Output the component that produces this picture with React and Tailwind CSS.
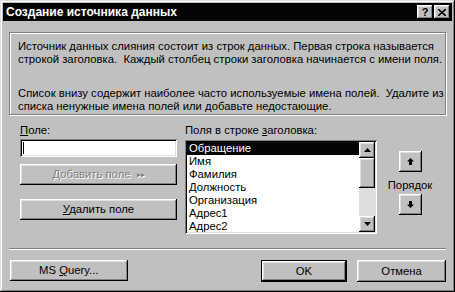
const raised =
  'shadow-[inset_-1px_-1px_#000,inset_1px_1px_#fff,inset_-2px_-2px_#808080,inset_2px_2px_#dfdfdf]';
const sunken =
  'shadow-[inset_1px_1px_#808080,inset_-1px_-1px_#fff,inset_2px_2px_#000,inset_-2px_-2px_#dfdfdf]';

function Arrow({ dir = 'up', stem = false }) {
  // small black triangle, optional stem for the order buttons
  if (stem) {
    return (
      <svg width="7" height="7" viewBox="0 0 7 7" className="block">
        {dir === 'up' ? (
          <path d="M3.5 0 L7 3.5 L0 3.5 Z M2 3.5 H5 V7 H2 Z" fill="#000" />
        ) : (
          <path d="M2 0 H5 V3.5 H2 Z M0 3.5 H7 L3.5 7 Z" fill="#000" />
        )}
      </svg>
    );
  }
  return (
    <svg width="7" height="4" viewBox="0 0 7 4" className="block">
      {dir === 'up' ? (
        <path d="M3.5 0 L7 4 L0 4 Z" fill="#000" />
      ) : (
        <path d="M0 0 H7 L3.5 4 Z" fill="#000" />
      )}
    </svg>
  );
}

function Button({ children, className = '', isDefault = false, disabled = false }) {
  const inner = (
    <div
      className={`flex h-full w-full items-center justify-center bg-[#c0c0c0] ${raised} ${
        disabled ? 'text-[#808080] [text-shadow:1px_1px_#fff]' : 'text-black'
      }`}
    >
      {children}
    </div>
  );
  if (isDefault) {
    return <div className={`border border-black ${className}`}>{inner}</div>;
  }
  return <div className={className}>{inner}</div>;
}

const fields = ['Обращение', 'Имя', 'Фамилия', 'Должность', 'Организация', 'Адрес1', 'Адрес2'];

export default function App() {
  return (
    <div
      className={`flex h-[292px] w-[455px] flex-col overflow-hidden bg-[#c0c0c0] p-[3px] text-[11.3px] leading-[13px] text-black ${'shadow-[inset_-1px_-1px_#000,inset_1px_1px_#dfdfdf,inset_-2px_-2px_#808080,inset_2px_2px_#fff]'}`}
      style={{ fontFamily: '"Liberation Sans", Arial, sans-serif' }}
    >
      {/* title bar */}
      <div className="flex h-[18px] shrink-0 items-center justify-between bg-[#050505] pl-[3px] pr-[2px]">
        <span className="text-[12px] font-bold leading-[16px] text-white">
          Создание источника данных
        </span>
        <div className="flex">
          <div className={`flex h-[14px] w-[16px] items-center justify-center bg-[#c0c0c0] ${raised}`}>
            <span className="text-[11px] font-bold leading-none">?</span>
          </div>
          <div className={`ml-[1px] flex h-[14px] w-[16px] items-center justify-center bg-[#c0c0c0] ${raised}`}>
            <svg width="8" height="7" viewBox="0 0 8 7" className="block">
              <path d="M0 0 L8 7 M8 0 L0 7" stroke="#000" strokeWidth="1.6" />
            </svg>
          </div>
        </div>
      </div>

      <div className="flex flex-1 flex-col px-[6px]">
        {/* info group */}
        <div className="mt-[11px] h-[83px] border border-[#808080] pl-[8px] pt-[7px] shadow-[inset_1px_1px_#fff,1px_1px_#fff]">
          <p className="leading-[13px]">
            Источник данных слияния состоит из строк данных. Первая строка называется
            <br />
            строкой заголовка.&nbsp; Каждый столбец строки заголовка начинается с имени поля.
          </p>
          <p className="mt-[21px] leading-[13px]">
            Список внизу содержит наиболее часто используемые имена полей.&nbsp; Удалите из
            <br />
            списка ненужные имена полей или добавьте недостающие.
          </p>
        </div>

        {/* middle */}
        <div className="mt-[9px] flex">
          <div className="ml-[11px] flex w-[157px] flex-col">
            <span>
              <u>П</u>оле:
            </span>
            <div className={`mt-[2px] flex h-[18px] items-center bg-white pl-[3px] ${sunken}`}>
              <span className="h-[12px] w-[1px] bg-black" />
            </div>
            <Button disabled className="mt-[7px] h-[21px]">
              <span>
                <u>Д</u>обавить поле
              </span>
              <span className="ml-[6px] text-[7px] font-bold">▸▸</span>
            </Button>
            <Button className="mt-[14px] h-[21px]">
              <span>
                <u>У</u>далить поле
              </span>
            </Button>
          </div>

          <div className="ml-[8px] flex w-[192px] flex-col">
            <span>
              Поля в строке <u>з</u>аголовка:
            </span>
            <div className={`mt-[3px] flex h-[94px] bg-white p-[2px] ${sunken}`}>
              <div className="flex-1 overflow-hidden">
                {fields.map((f, i) => (
                  <div
                    key={f}
                    className={`h-[13px] pl-[2px] leading-[13px] ${
                      i === 0 ? 'bg-[#050505] text-white' : ''
                    }`}
                  >
                    {f}
                  </div>
                ))}
              </div>
              <div className="flex w-[16px] flex-col">
                <div className={`flex h-[16px] items-center justify-center bg-[#c0c0c0] ${raised}`}>
                  <Arrow dir="up" />
                </div>
                <div className={`h-[30px] bg-[#c0c0c0] ${raised}`} />
                <div className="flex-1 bg-[#dedede]" />
                <div className={`flex h-[16px] items-center justify-center bg-[#c0c0c0] ${raised}`}>
                  <Arrow dir="down" />
                </div>
              </div>
            </div>
          </div>

          <div className="ml-[11px] flex w-[44px] flex-col items-center">
            <Button className="mt-[27px] h-[21px] w-[23px]">
              <Arrow dir="up" stem />
            </Button>
            <span className="mt-[7px]">Порядок</span>
            <Button className="mt-[2px] h-[21px] w-[23px]">
              <Arrow dir="down" stem />
            </Button>
          </div>
        </div>

        {/* separator */}
        <div className="mt-[14px] h-[2px] border-t border-[#808080] bg-[#c0c0c0] shadow-[inset_0_1px_#fff]" />

        {/* bottom buttons */}
        <div className="mt-[10px] flex">
          <Button className="ml-[1px] h-[21px] w-[118px]">
            <span>
              MS <u>Q</u>uery...
            </span>
          </Button>
          <Button isDefault className="ml-[133px] h-[22px] w-[87px]">
            OK
          </Button>
          <Button className="ml-[10px] h-[22px] w-[89px]">Отмена</Button>
        </div>
      </div>
    </div>
  );
}
